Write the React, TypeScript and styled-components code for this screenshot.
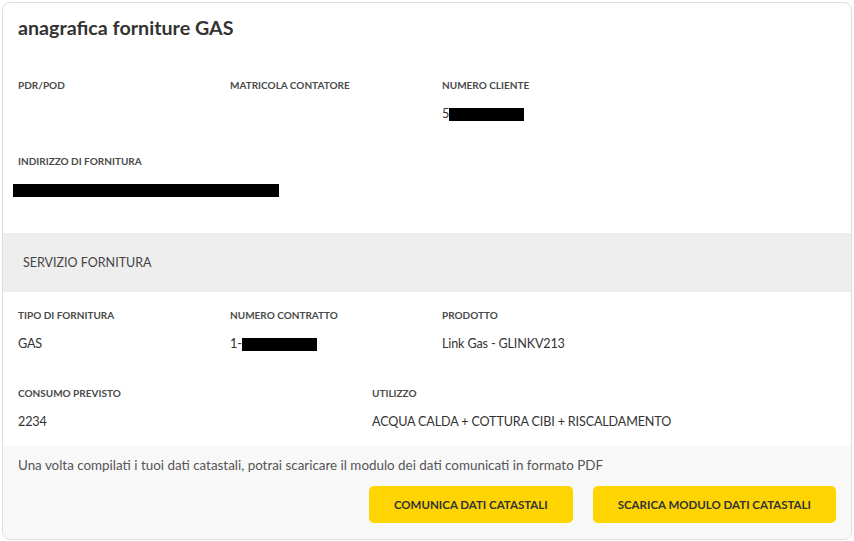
import styled, { createGlobalStyle } from "styled-components";

const GlobalStyle = createGlobalStyle`
  body {
    margin: 0;
    background: #ffffff;
    font-family: Lato, "Open Sans", sans-serif;
    color: #333333;
  }
`;

interface FieldData {
  label: string;
  value?: string;
  redact?: number;
  offset?: number;
}

const topRows: { cols: string; fields: FieldData[] }[] = [
  {
    cols: "212px 212px 1fr",
    fields: [
      { label: "PDR/POD" },
      { label: "MATRICOLA CONTATORE" },
      { label: "NUMERO CLIENTE", value: "5", redact: 75 },
    ],
  },
  {
    cols: "1fr",
    fields: [{ label: "INDIRIZZO DI FORNITURA", redact: 266, offset: -5 }],
  },
];

const serviceRows: { cols: string; fields: FieldData[] }[] = [
  {
    cols: "212px 212px 1fr",
    fields: [
      { label: "TIPO DI FORNITURA", value: "GAS" },
      { label: "NUMERO CONTRATTO", value: "1-", redact: 75 },
      { label: "PRODOTTO", value: "Link Gas - GLINKV213" },
    ],
  },
  {
    cols: "354px 1fr",
    fields: [
      { label: "CONSUMO PREVISTO", value: "2234" },
      { label: "UTILIZZO", value: "ACQUA CALDA + COTTURA CIBI + RISCALDAMENTO" },
    ],
  },
];

const Field = ({ label, value, redact, offset }: FieldData) => (
  <FieldBox>
    <Label>{label}</Label>
    <Value>
      {value}
      {redact ? <Redacted $width={redact} $offset={offset ?? 0} /> : null}
    </Value>
  </FieldBox>
);

export default function App() {
  return (
    <>
      <GlobalStyle />
      <Card>
        <Header>
          <Title>anagrafica forniture GAS</Title>
          <Rows>
            {topRows.map((row, i) => (
              <Row key={i} $cols={row.cols}>
                {row.fields.map((f) => (
                  <Field key={f.label} {...f} />
                ))}
              </Row>
            ))}
          </Rows>
        </Header>
        <Band>SERVIZIO FORNITURA</Band>
        <Service>
          {serviceRows.map((row, i) => (
            <Row key={i} $cols={row.cols}>
              {row.fields.map((f) => (
                <Field key={f.label} {...f} />
              ))}
            </Row>
          ))}
        </Service>
        <Footer>
          <Note>
            Una volta compilati i tuoi dati catastali, potrai scaricare il modulo dei dati
            comunicati in formato PDF
          </Note>
          <Actions>
            <Button>COMUNICA DATI CATASTALI</Button>
            <Button>SCARICA MODULO DATI CATASTALI</Button>
          </Actions>
        </Footer>
      </Card>
    </>
  );
}

const Card = styled.div`
  margin: 2px;
  width: 848px;
  height: 536px;
  border: 1px solid #dedede;
  border-radius: 8px;
  overflow: hidden;
  display: flex;
  flex-direction: column;
  background: #ffffff;
`;

const Header = styled.div`
  padding: 12px 15px 34px;
`;

const Title = styled.h1`
  margin: 0;
  font-size: 19.7px;
  line-height: 26px;
  font-weight: 700;
  color: #333333;
`;

const Rows = styled.div`
  display: flex;
  flex-direction: column;
  gap: 31px;
  margin-top: 37px;
`;

const Row = styled.div<{ $cols: string }>`
  display: grid;
  grid-template-columns: ${(p) => p.$cols};
`;

const FieldBox = styled.div`
  display: flex;
  flex-direction: column;
  gap: 13px;
`;

const Label = styled.span`
  font-size: 10px;
  line-height: 14px;
  font-weight: 700;
  color: #4a4a4a;
`;

const Value = styled.span`
  display: flex;
  align-items: center;
  font-size: 12.6px;
  letter-spacing: -0.15px;
  line-height: 18px;
  height: 18px;
  color: #333333;
`;

const Redacted = styled.span<{ $width: number; $offset: number }>`
  display: inline-block;
  width: ${(p) => p.$width}px;
  height: 13px;
  margin-left: ${(p) => p.$offset}px;
  background: #000000;
`;

const Band = styled.div`
  height: 59px;
  display: flex;
  align-items: center;
  padding-left: 20px;
  background: #eeeeee;
  font-size: 12.5px;
  color: #444444;
`;

const Service = styled.div`
  padding: 16px 15px 15px;
  display: flex;
  flex-direction: column;
  gap: 33px;
`;

const Footer = styled.div`
  flex: 1;
  background: #f8f8f8;
  padding: 10px 15px 16px;
  display: flex;
  flex-direction: column;
  gap: 12px;
`;

const Note = styled.p`
  margin: 0;
  font-size: 13.4px;
  line-height: 18px;
  color: #555555;
`;

const Actions = styled.div`
  display: flex;
  justify-content: flex-end;
  gap: 20px;
`;

const Button = styled.button`
  height: 37px;
  padding: 0 25px;
  border: none;
  border-radius: 5px;
  background: #fed500;
  font-family: Lato, "Open Sans", sans-serif;
  font-size: 11.5px;
  font-weight: 700;
  color: #333333;
  cursor: pointer;
`;
